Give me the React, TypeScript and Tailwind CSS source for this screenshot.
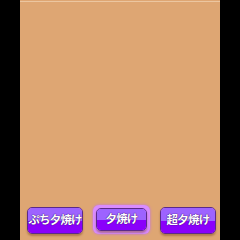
import React from 'react';

interface SunsetButtonProps {
  label: string;
  active?: boolean;
}

const SunsetButton: React.FC<SunsetButtonProps> = ({ label, active }) => {
  return (
    <div className="relative">
      <div
        className={`rounded-[6px] ${
          active ? 'p-[3px] bg-[#d98cff] shadow-[0_0_3px_#c070f0]' : 'p-0'
        }`}
      >
        <button
          className={`flex flex-col overflow-hidden rounded-[5px] border border-[#5b2a8a] shadow-[0_2px_2px_rgba(120,70,30,0.45)] ${
            active ? 'w-[51px] h-[23px]' : 'w-[56px] h-[27px]'
          }`}
        >
          <span className="flex-1 bg-[#9d63ff]" />
          <span className="flex-1 bg-[#8a00fb]" />
        </button>
      </div>
      {/* ラベルは上に重ねる */}
      <span
        className="pointer-events-none absolute inset-0 flex items-center justify-center pb-[1px] text-white font-bold text-[11.5px] leading-none tracking-[-0.8px] [text-shadow:0_0_1px_#3a0a70,0_0_1px_#3a0a70]"
        style={{ fontFamily: '"Noto Sans CJK JP", "Noto Sans", sans-serif' }}
      >
        {label}
      </span>
    </div>
  );
};

const buttons = [
  { label: 'ぷち夕焼け', active: false },
  { label: '夕焼け', active: true },
  { label: '超夕焼け', active: false },
];

export default function App() {
  return (
    <div className="w-[240px] h-[240px] bg-black flex justify-center">
      <div className="w-[200px] h-full bg-[#dea673] flex flex-col">
        <div className="h-[1px]" />
        <div className="h-[1px] bg-[#ecc6a0]" />
        <div className="flex-1" />
        <div className="flex items-end justify-center gap-[10px] pb-[6px] pl-[3px]">
          {buttons.map((b) => (
            <SunsetButton key={b.label} label={b.label} active={b.active} />
          ))}
        </div>
      </div>
    </div>
  );
}
